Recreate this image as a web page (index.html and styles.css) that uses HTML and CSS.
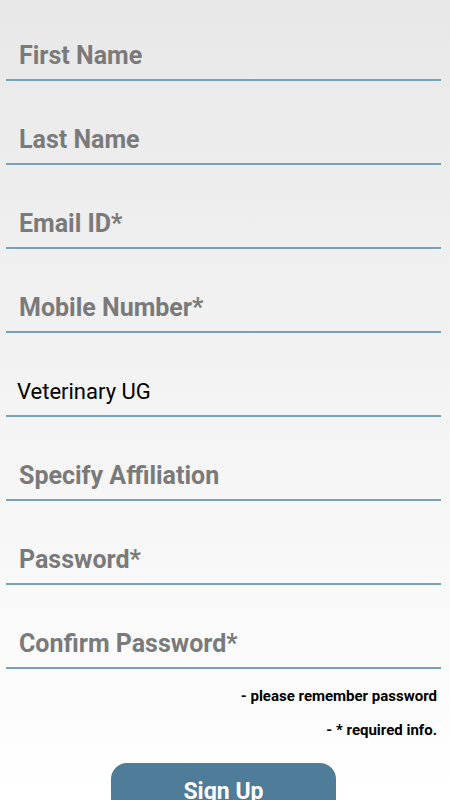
FILE: index.html
```html
<!DOCTYPE html>
<html lang="en">
<head>
    <meta charset="UTF-8">
    <meta name="viewport" content="width=device-width, initial-scale=1.0">
    <title>Sign Up</title>
    <link rel="stylesheet" href="styles.css">
</head>
<body>
    <div class="page">
        <form class="signup">
            <div class="field"><input type="text" placeholder="First Name"></div>
            <div class="field"><input type="text" placeholder="Last Name"></div>
            <div class="field"><input type="email" placeholder="Email ID*"></div>
            <div class="field"><input type="tel" placeholder="Mobile Number*"></div>
            <div class="field select">Veterinary UG</div>
            <div class="field"><input type="text" placeholder="Specify Affiliation"></div>
            <div class="field"><input type="password" placeholder="Password*"></div>
            <div class="field"><input type="password" placeholder="Confirm Password*"></div>

            <div class="notes">
                <p>- please remember password</p>
                <p>- * required info.</p>
            </div>

            <div class="actions">
                <button type="button" class="btn">Sign Up</button>
            </div>
        </form>
    </div>
</body>
</html>
```

FILE: styles.css
```css
html, body {
    margin: 0;
    padding: 0;
    height: 100%;
}
body {
    font-family: Roboto, "Liberation Sans", sans-serif;
    background: linear-gradient(#e8e8e8, #ffffff 800px);
    overflow: hidden;
}
.page {
    padding: 0 9px 0 6px;
}
.signup {
    margin-top: -3px;
}
.field {
    height: 84px;
    box-sizing: border-box;
    border-bottom: 2px solid #7ba0b9;
    display: flex;
    align-items: flex-end;
    padding: 0 13px 9px;
}
.field input {
    width: 100%;
    border: none;
    outline: none;
    background: transparent;
    padding: 0;
    font-family: inherit;
    font-size: 25px;
    line-height: 24px;
    font-weight: 700;
    color: #222;
}
.field input::placeholder {
    color: #7a7a7a;
    opacity: 1;
}
.field.select {
    padding: 0 11px 11px;
    font-size: 22px;
    line-height: 24px;
    color: #000;
}
.notes {
    padding-right: 4px;
    text-align: right;
    margin-top: 18px;
}
.notes p {
    margin: 0 0 16px;
    font-size: 15px;
    line-height: 18px;
    font-weight: 700;
    color: #000;
}
.notes p:last-child {
    margin-bottom: 0;
}
.actions {
    display: flex;
    justify-content: center;
    margin-top: 24px;
}
.btn {
    width: 225px;
    height: 56px;
    border: none;
    border-radius: 16px;
    background: #4e7c99;
    color: #fff;
    font-family: inherit;
    font-size: 23px;
    font-weight: 700;
}
```
